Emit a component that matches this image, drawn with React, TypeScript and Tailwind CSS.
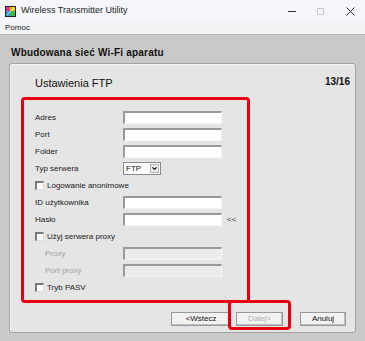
import { ChevronDown } from "lucide-react";

const Field = ({ label, disabled, indent, after }: { label: string; disabled?: boolean; indent?: boolean; after?: string }) => (
  <div className="flex items-center h-[17px]">
    <span className={`w-[88px] shrink-0 ${indent ? "pl-[10px] text-[#a3a3a3]" : "text-[#1a1a1a]"}`}>{label}</span>
    <div
      className={`w-[99px] h-[13px] border-t-2 border-l-2 border-r border-b border-t-[#9a9a9a] border-l-[#9a9a9a] border-r-[#f4f4f4] border-b-[#f4f4f4] ${
        disabled ? "bg-[#ececec]" : "bg-white"
      }`}
    />
    {after && <span className="ml-[5px] text-[#333]">{after}</span>}
  </div>
);

const Check = ({ label }: { label: string }) => (
  <div className="flex items-center h-[17px]">
    <span className="w-[9px] h-[9px] bg-white border-t-2 border-l-2 border-r border-b border-t-[#7a7a7a] border-l-[#7a7a7a] border-r-[#dcdcdc] border-b-[#dcdcdc]" />
    <span className="ml-[3px] text-[#1a1a1a]">{label}</span>
  </div>
);

const Btn = ({ children, disabled, w }: { children: string; disabled?: boolean; w: string }) => (
  <button
    className={`${w} h-[14px] block bg-[#f2f2f2] border border-[#9a9a9a] shadow-[inset_-1px_-1px_0_#bdbdbd] text-[8px] leading-none ${
      disabled ? "text-[#b0b0b0]" : "text-[#111]"
    }`}
  >
    {children}
  </button>
);

export default function App() {
  return (
    <div className="w-[365px] h-[341px] flex flex-col bg-[#c9c9c9] overflow-hidden" style={{ fontFamily: '"Liberation Sans", Arial, sans-serif' }}>
      {/* title bar */}
      <div className="h-[22px] flex items-center bg-[#f4f6fa] pl-[5px] shrink-0">
        <svg width="11" height="11" viewBox="0 0 11 11">
          <rect width="11" height="11" fill="#222" />
          <rect x="1" y="1" width="4" height="4" fill="#e23b8e" />
          <rect x="5" y="1" width="5" height="4" fill="#f5c400" />
          <rect x="1" y="5" width="4" height="5" fill="#2f9ad8" />
          <rect x="5" y="5" width="5" height="5" fill="#3fb54a" />
          <path d="M2 9 L9 2" stroke="#fff" strokeWidth="1" opacity="0.7" />
        </svg>
        <span className="ml-[5px] text-[9px] text-[#1b1b1b]">Wireless Transmitter Utility</span>
        <div className="ml-auto flex items-center h-full">
          <div className="w-[29px] flex justify-center">
            <div className="w-[8px] h-px bg-[#333]" />
          </div>
          <div className="w-[29px] flex justify-center">
            <div className="w-[7px] h-[7px] border border-[#c4c4c4] rounded-[1px]" />
          </div>
          <div className="w-[30px] flex justify-center">
            <svg width="9" height="9" viewBox="0 0 9 9">
              <path d="M0.5 0.5 L8.5 8.5 M8.5 0.5 L0.5 8.5" stroke="#333" strokeWidth="1" />
            </svg>
          </div>
        </div>
      </div>
      {/* menu bar */}
      <div className="h-[12px] flex items-center bg-[#f2f3f5] pl-[5px] text-[8px] text-[#1b1b1b] shrink-0">Pomoc</div>

      {/* body */}
      <div className="flex-1 flex flex-col px-[9px] pt-[10px] pb-[8px] border-t border-[#b9b9b9]">
        <div className="pl-[2px] h-[18px] text-[10px] font-bold text-[#111] tracking-[0.2px]">Wbudowana sieć Wi-Fi aparatu</div>
        <div className="flex-1 flex flex-col bg-[#e5e5e5] border border-[#a2a2a2] rounded-[3px] shadow-[inset_1px_1px_0_#f5f5f5]">
          <div className="flex items-start justify-between pl-[25px] pr-[5px] pt-[11px] h-[33px]">
            <span className="text-[11px] text-[#111]">Ustawienia FTP</span>
            <span className="text-[10px] font-bold text-[#111] -mt-[1px]">13/16</span>
          </div>
          <div className="ml-[11px] w-[229px] border-[3px] border-[#e60012] rounded-[4px] pl-[11px] pt-[9px] pb-[4px] text-[8px] leading-none">
            <Field label="Adres" />
            <Field label="Port" />
            <Field label="Folder" />
            <div className="flex items-center h-[17px]">
              <span className="w-[88px] shrink-0 text-[#1a1a1a]">Typ serwera</span>
              <div className="w-[38px] h-[13px] bg-white border border-[#8a8a8a] flex items-center justify-between pl-[2px] pr-px">
                <span className="text-[#111]">FTP</span>
                <span className="w-[9px] h-[9px] bg-[#ececec] border border-[#b5b5b5] flex items-center justify-center">
                  <ChevronDown size={7} strokeWidth={4} className="text-[#111]" />
                </span>
              </div>
            </div>
            <Check label="Logowanie anonimowe" />
            <Field label="ID użytkownika" />
            <Field label="Hasło" after="<<" />
            <Check label="Użyj serwera proxy" />
            <Field label="Proxy" indent disabled />
            <Field label="Port proxy" indent disabled />
            <Check label="Tryb PASV" />
          </div>
          <div className="mt-auto flex items-center justify-end pr-[9px] pb-[6px]">
            <Btn w="w-[60px]">{"<Wstecz"}</Btn>
            <div className="relative flex ml-[5px]">
              <Btn w="w-[47px]" disabled>
                {"Dalej>"}
              </Btn>
              <div className="absolute -left-[8px] -right-[8px] -top-[12px] -bottom-[4px] border-[3px] border-[#e60012] rounded-[4px]" />
            </div>
            <div className="flex ml-[17px]">
              <Btn w="w-[46px]">Anuluj</Btn>
            </div>
          </div>
        </div>
      </div>
    </div>
  );
}
